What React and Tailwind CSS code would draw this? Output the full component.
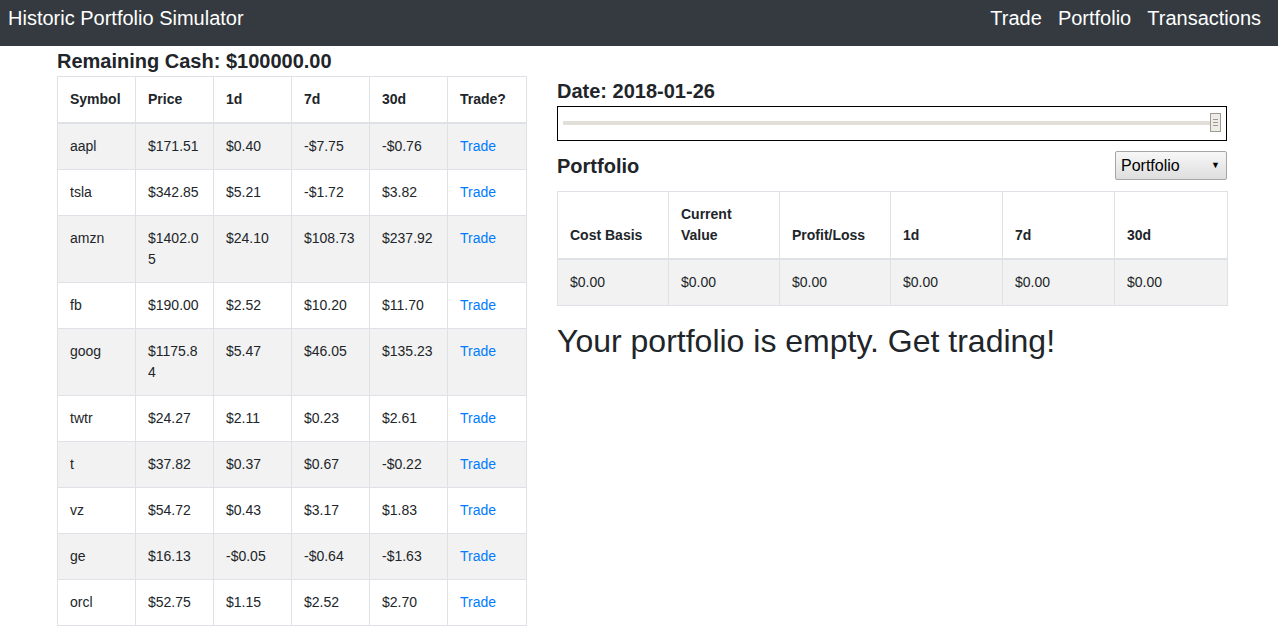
import React from "react";

const stocks = [
    { symbol: "aapl", price: "$171.51", d1: "$0.40", d7: "-$7.75", d30: "-$0.76" },
    { symbol: "tsla", price: "$342.85", d1: "$5.21", d7: "-$1.72", d30: "$3.82" },
    { symbol: "amzn", price: "$1402.05", d1: "$24.10", d7: "$108.73", d30: "$237.92" },
    { symbol: "fb", price: "$190.00", d1: "$2.52", d7: "$10.20", d30: "$11.70" },
    { symbol: "goog", price: "$1175.84", d1: "$5.47", d7: "$46.05", d30: "$135.23" },
    { symbol: "twtr", price: "$24.27", d1: "$2.11", d7: "$0.23", d30: "$2.61" },
    { symbol: "t", price: "$37.82", d1: "$0.37", d7: "$0.67", d30: "-$0.22" },
    { symbol: "vz", price: "$54.72", d1: "$0.43", d7: "$3.17", d30: "$1.83" },
    { symbol: "ge", price: "$16.13", d1: "-$0.05", d7: "-$0.64", d30: "-$1.63" },
    { symbol: "orcl", price: "$52.75", d1: "$1.15", d7: "$2.52", d30: "$2.70" },
];

const portfolioHeaders = ["Cost Basis", "Current Value", "Profit/Loss", "1d", "7d", "30d"];

function Navbar() {
    return (
        <nav className="h-[46px] bg-[#343a40] flex items-start justify-between pt-[6px] pl-2 pr-[9px] text-white text-[20px] leading-[24px]">
            <span>Historic Portfolio Simulator</span>
            <div className="flex">
                <a className="px-2">Trade</a>
                <a className="px-2">Portfolio</a>
                <a className="px-2">Transactions</a>
            </div>
        </nav>
    );
}

function StockTable() {
    const th = "border border-[#dee2e6] border-b-2 px-3 py-3 text-left font-bold align-bottom";
    const td = "border border-[#dee2e6] px-3 py-3 align-top break-all";
    return (
        <table className="table-fixed border-collapse w-[470px] text-[14px] leading-[21px]">
            <colgroup>
                <col className="w-[78px]" />
                <col className="w-[78px]" />
                <col className="w-[78px]" />
                <col className="w-[78px]" />
                <col className="w-[78px]" />
                <col className="w-[79px]" />
            </colgroup>
            <thead>
                <tr>
                    <th className={th}>Symbol</th>
                    <th className={th}>Price</th>
                    <th className={th}>1d</th>
                    <th className={th}>7d</th>
                    <th className={th}>30d</th>
                    <th className={th}>Trade?</th>
                </tr>
            </thead>
            <tbody>
                {stocks.map((s, i) => (
                    <tr key={s.symbol} className={i % 2 === 0 ? "bg-[#f2f2f2]" : "bg-white"}>
                        <td className={td}>{s.symbol}</td>
                        <td className={td}>{s.price}</td>
                        <td className={td}>{s.d1}</td>
                        <td className={td}>{s.d7}</td>
                        <td className={td}>{s.d30}</td>
                        <td className={td}>
                            <a className="text-[#007bff]">Trade</a>
                        </td>
                    </tr>
                ))}
            </tbody>
        </table>
    );
}

function Slider() {
    return (
        <div className="h-[35px] border border-black flex items-center pl-[5px] pr-[4px]">
            <div className="flex-1 h-[4px] bg-[#e2dfd8] -mt-[2px]" />
            <div className="w-[11px] h-[19px] -mt-[2px] bg-[#eeece7] border border-[#9d9a93] flex flex-col items-center justify-center gap-[2px]">
                <div className="w-[5px] h-px bg-[#9d9a93]" />
                <div className="w-[5px] h-px bg-[#9d9a93]" />
                <div className="w-[5px] h-px bg-[#9d9a93]" />
            </div>
            <div className="w-[1px]" />
        </div>
    );
}

function PortfolioTable() {
    const th = "border border-[#dee2e6] border-b-2 px-3 py-3 text-left font-bold align-bottom";
    const td = "border border-[#dee2e6] px-3 py-3 align-top";
    return (
        <table className="table-fixed border-collapse w-[670px] text-[14px] leading-[21px]">
            <colgroup>
                <col className="w-[111px]" />
                <col className="w-[111px]" />
                <col className="w-[111px]" />
                <col className="w-[112px]" />
                <col className="w-[112px]" />
                <col className="w-[113px]" />
            </colgroup>
            <thead>
                <tr>
                    {portfolioHeaders.map((h) => (
                        <th key={h} className={th}>{h}</th>
                    ))}
                </tr>
            </thead>
            <tbody>
                <tr className="bg-[#f2f2f2]">
                    {portfolioHeaders.map((h) => (
                        <td key={h} className={td}>$0.00</td>
                    ))}
                </tr>
            </tbody>
        </table>
    );
}

export default function App() {
    return (
        <div className="min-h-screen bg-white text-[#212529] font-['Liberation_Sans',Arial,sans-serif]">
            <Navbar />
            <div className="flex pl-[57px] gap-[30px]">
                <div className="w-[470px] flex flex-col">
                    <h5 className="mt-[3px] mb-[3px] text-[20px] leading-[24px] font-bold">Remaining Cash: $100000.00</h5>
                    <StockTable />
                </div>
                <div className="w-[670px] flex flex-col">
                    <h5 className="mt-[33px] mb-[3px] text-[20px] leading-[24px] font-bold">Date: 2018-01-26</h5>
                    <Slider />
                    <div className="mt-[10px] h-[29px] flex items-center justify-between">
                        <h5 className="text-[20px] leading-[24px] font-bold">Portfolio</h5>
                        <div className="w-[112px] h-[29px] border border-[#a6a6a6] rounded-[2px] bg-gradient-to-b from-[#f7f7f7] to-[#dedede] flex items-center justify-between pl-[5px] pr-[6px] text-[16px] text-black">
                            <span>Portfolio</span>
                            <span className="text-[9px]">▼</span>
                        </div>
                    </div>
                    <div className="mt-[11px]">
                        <PortfolioTable />
                    </div>
                    <h2 className="mt-[16px] text-[32px] leading-[38px] font-normal">Your portfolio is empty. Get trading!</h2>
                </div>
            </div>
        </div>
    );
}
